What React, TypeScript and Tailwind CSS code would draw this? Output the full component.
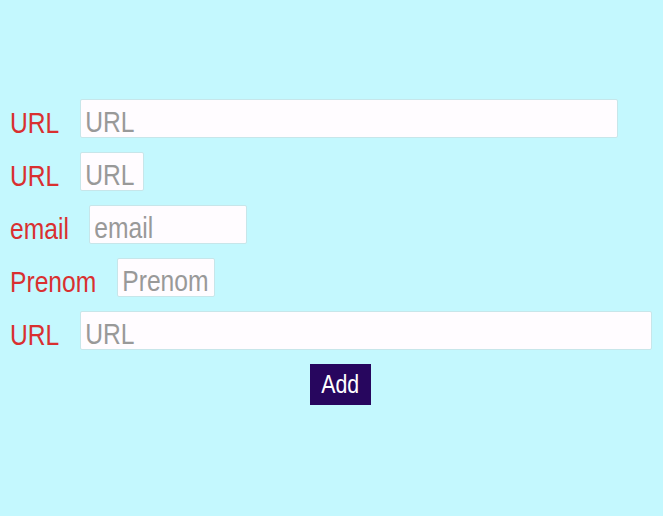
import React from "react";

// the reference uses a narrow face; we squeeze Liberation Sans horizontally
const fields = [
  { label: "URL", labelBox: "w-[70px]", box: "w-[538px]", input: "w-[631px]" },
  { label: "URL", labelBox: "w-[70px]", box: "w-[64px]", input: "w-[73px]" },
  { label: "email", labelBox: "w-[79px]", box: "w-[158px]", input: "w-[184px]" },
  { label: "Prenom", labelBox: "w-[107px]", box: "w-[98px]", input: "w-[113px]" },
  { label: "URL", labelBox: "w-[70px]", box: "w-[572px]", input: "w-[671px]" },
];

export default function App() {
  return (
    <div className="min-h-[516px] w-full bg-[#c4f8fe] pt-[99px] font-['Liberation_Sans',Arial,sans-serif]">
      <form className="flex flex-col">
        {fields.map((f, i) => (
          <div key={i} className="flex h-[53px] items-start pl-[10px]">
            <label className={`${f.labelBox} shrink-0 pt-[10px]`}>
              <span className="inline-block origin-left scale-x-[0.85] whitespace-nowrap text-[29px] leading-[29px] text-[#d93030]">
                {f.label}
              </span>
            </label>
            <div
              className={`${f.box} h-[39px] shrink-0 overflow-hidden rounded-[2px] border border-[#c7e6ea] bg-[#fffcff]`}
            >
              <input
                placeholder={f.label}
                className={`${f.input} h-[37px] origin-left scale-x-[0.85] bg-transparent pl-[5px] pt-[8px] text-[29px] text-gray-700 outline-none placeholder:text-[#999]`}
              />
            </div>
          </div>
        ))}
        <div className="flex justify-center">
          <button
            type="button"
            className="ml-[18px] h-[41px] w-[61px] bg-[#27065e] text-white"
          >
            <span className="inline-block scale-x-[0.82] text-[26px] leading-[30px]">
              Add
            </span>
          </button>
        </div>
      </form>
    </div>
  );
}
